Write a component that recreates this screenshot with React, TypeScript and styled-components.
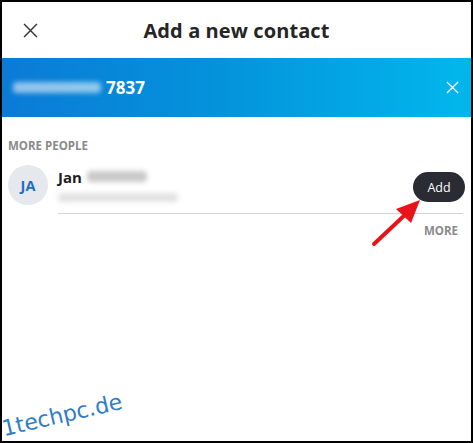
import styled, { createGlobalStyle } from "styled-components";

const GlobalStyle = createGlobalStyle`
  * { box-sizing: border-box; }
  html, body { margin: 0; padding: 0; background: #fff; }
  body { font-family: "Open Sans", "Noto Sans", sans-serif; }
`;

const CloseIcon = ({ color, size }: { color: string; size: number }) => (
  <svg width={size} height={size} viewBox="0 0 14 14">
    <path d="M1 1 L13 13 M13 1 L1 13" stroke={color} strokeWidth="1.4" fill="none" />
  </svg>
);

const App = () => {
  return (
    <>
      <GlobalStyle />
      <Frame>
        <Header>
          <IconButton>
            <CloseIcon color="#3a3a3a" size={15} />
          </IconButton>
          <Title>Add a new contact</Title>
          <span />
        </Header>
        <SearchBar>
          <Blur $w={88} $h={11} $color="rgba(255,255,255,0.55)" />
          <Number>7837</Number>
          <BarClose>
            <CloseIcon color="#ffffff" size={13} />
          </BarClose>
        </SearchBar>
        <Section>
          <Label>MORE PEOPLE</Label>
          <ContactRow>
            <Avatar>JA</Avatar>
            <ContactBody>
              <ContactInfo>
                <NameLine>
                  <Name>Jan</Name>
                  <Blur $w={60} $h={11} $color="#c9c9c9" />
                </NameLine>
                <Blur $w={120} $h={9} $color="#e2e2e2" />
              </ContactInfo>
              <AddButton>Add</AddButton>
            </ContactBody>
          </ContactRow>
          <MoreLink>MORE</MoreLink>
        </Section>
        <Arrow width="60" height="60" viewBox="0 0 60 60">
          <path d="M4 52 L38 20" stroke="#e8141a" strokeWidth="4" strokeLinecap="round" />
          <path d="M50 8 L26 17 L41 31 Z" fill="#e8141a" />
        </Arrow>
        <Watermark>1techpc.de</Watermark>
      </Frame>
    </>
  );
};
export default App;

const Frame = styled.div`
  position: relative;
  width: 473px;
  height: 443px;
  border: 2px solid #000;
  background: #fff;
  overflow: hidden;
`;

const Header = styled.div`
  display: grid;
  grid-template-columns: 56px 1fr 56px;
  align-items: center;
  height: 56px;
`;

const IconButton = styled.div`
  display: flex;
  justify-content: center;
  align-items: center;
`;

const Title = styled.h1`
  margin: 0;
  text-align: center;
  font-size: 20px;
  font-weight: 700;
  color: #252525;
  letter-spacing: 0.1px;
`;

const SearchBar = styled.div`
  display: flex;
  align-items: center;
  height: 59px;
  padding: 0 12px 0 11px;
  background: linear-gradient(90deg, #0b7bd6 0%, #0492db 45%, #02b7ec 100%);
`;

const Blur = styled.span<{ $w: number; $h: number; $color: string }>`
  display: inline-block;
  width: ${(p) => p.$w}px;
  height: ${(p) => p.$h}px;
  border-radius: 4px;
  background: ${(p) => p.$color};
  filter: blur(2.5px);
`;

const Number = styled.span`
  margin-left: 5px;
  color: #fff;
  font-size: 17px;
  font-weight: 700;
`;

const BarClose = styled.div`
  margin-left: auto;
  display: flex;
`;

const Section = styled.div`
  padding: 22px 8px 0 6px;
`;

const Label = styled.div`
  font-size: 11.5px;
  font-weight: 700;
  color: #8a8a8a;
  line-height: 14px;
`;

const ContactRow = styled.div`
  display: flex;
  margin-top: 12px;
`;

const Avatar = styled.div`
  flex: none;
  width: 40px;
  height: 40px;
  border-radius: 50%;
  background: #e6e8ee;
  color: #1f6fbf;
  font-size: 14.5px;
  font-weight: 700;
  display: flex;
  align-items: center;
  justify-content: center;
  margin-right: 10px;
`;

const ContactBody = styled.div`
  flex: 1;
  display: flex;
  align-items: center;
  justify-content: space-between;
  height: 49px;
  border-bottom: 1px solid #d3d3d3;
  padding-bottom: 8px;
`;

const ContactInfo = styled.div`
  display: flex;
  flex-direction: column;
  gap: 8px;
`;

const NameLine = styled.div`
  display: flex;
  align-items: center;
  gap: 5px;
`;

const Name = styled.span`
  font-size: 15px;
  font-weight: 700;
  color: #1e1e1e;
  line-height: 16px;
`;

const AddButton = styled.button`
  width: 52px;
  height: 30px;
  border: none;
  border-radius: 15px;
  background: #2a2b33;
  color: #fff;
  font-family: "Open Sans", "Noto Sans", sans-serif;
  font-size: 12.5px;
  margin-right: -2px;
  margin-top: 4px;
`;

const MoreLink = styled.div`
  text-align: right;
  padding-right: 5px;
  margin-top: 9px;
  font-size: 11.5px;
  font-weight: 700;
  color: #8a8a8a;
`;

const Arrow = styled.svg`
  position: absolute;
  left: 368px;
  top: 190px;
`;

const Watermark = styled.div`
  position: absolute;
  left: 3px;
  top: 414px;
  font-family: "DejaVu Sans", Verdana, sans-serif;
  font-size: 22px;
  color: #2f7dc6;
  transform: rotate(-13deg);
  transform-origin: left bottom;
`;
